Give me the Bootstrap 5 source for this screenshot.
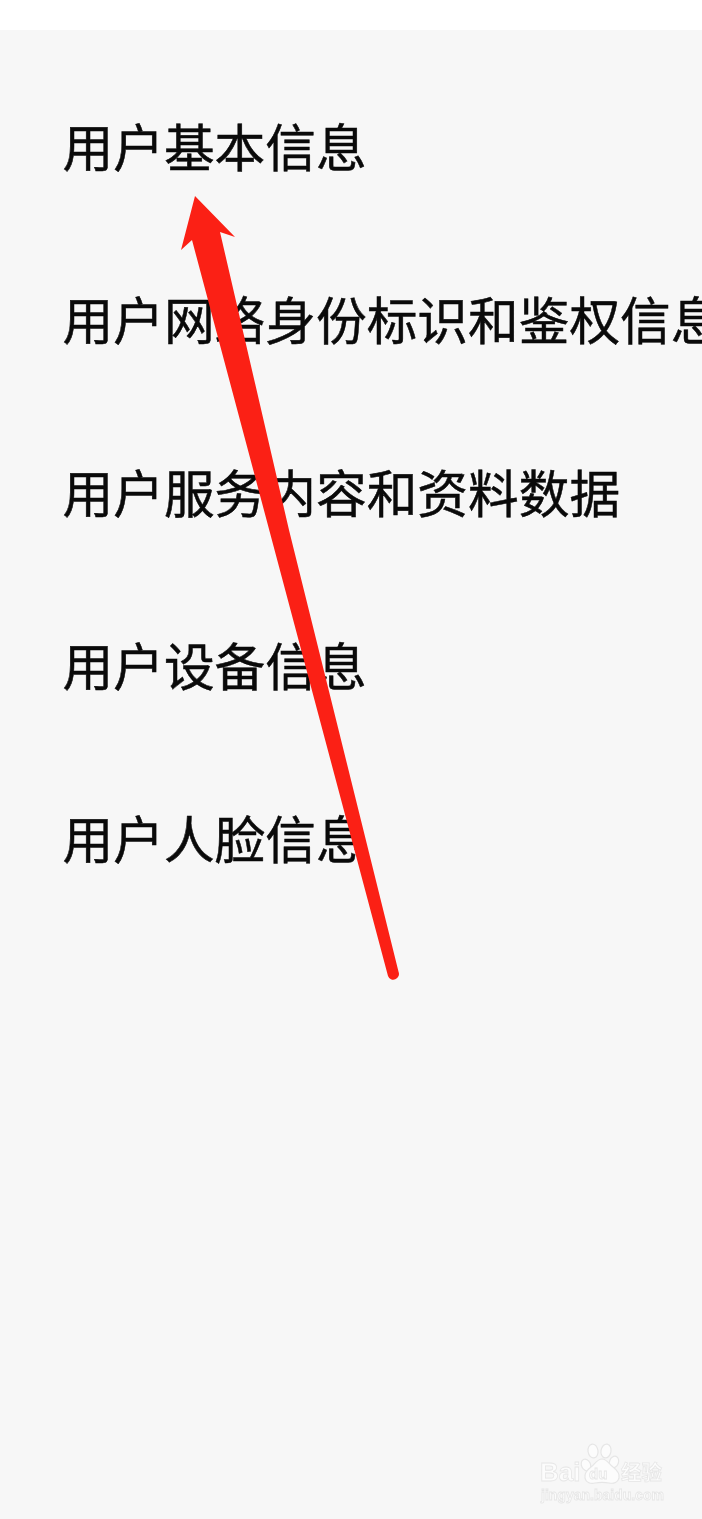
<!DOCTYPE html>
<html lang="zh-CN">
<head>
<meta charset="utf-8">
<title>用户信息</title>
<link href="https://cdn.jsdelivr.net/npm/bootstrap@5.3.0/dist/css/bootstrap.min.css" rel="stylesheet">
<style>
html,body{margin:0;width:702px;height:1519px;overflow:hidden;background:#fff;}
.topgap{height:30px;background:#fff;}
.sheet{height:1489px;background:#f7f7f7;padding-top:29px;}
.entry{height:173px;padding-left:62.5px;font:400 50.7px/173px "Noto Sans CJK SC","Liberation Sans",sans-serif;color:#0a0a0a;white-space:nowrap;-webkit-text-stroke:.5px #0a0a0a;}
.overlay{position:absolute;left:0;top:0;pointer-events:none;}
.mark-wm{position:absolute;left:537px;top:1442px;width:130px;height:64px;font-family:"Liberation Sans",sans-serif;color:#fcfcfc;-webkit-text-stroke:.8px #e6e6e6;filter:blur(.3px);}
.wm-bai{position:absolute;left:3px;top:15px;font-size:26px;font-weight:700;line-height:30px;}
.wm-du{position:absolute;left:52px;top:24px;font-size:15px;font-weight:700;line-height:16px;}
.wm-cn{position:absolute;left:84px;top:17px;font:700 20.5px/24px "Noto Sans CJK SC",sans-serif;white-space:nowrap;}
.wm-url{position:absolute;left:4px;top:44px;font-size:14px;line-height:18px;white-space:nowrap;font-weight:700;}
</style>
<script src="https://cdn.jsdelivr.net/npm/bootstrap@5.3.0/dist/js/bootstrap.bundle.min.js"></script>
</head>
<body class="position-relative">
<div class="topgap"></div>
<div class="sheet d-flex flex-column">
  <div class="entry">用户基本信息</div>
  <div class="entry">用户网络身份标识和鉴权信息</div>
  <div class="entry">用户服务内容和资料数据</div>
  <div class="entry">用户设备信息</div>
  <div class="entry">用户人脸信息</div>
</div>
<svg class="overlay" width="702" height="1519" viewBox="0 0 702 1519" aria-hidden="true">
  <path fill="#fb2015" d="M195 196 L235 237 L220 232 L289 530 L398.6 972 A5.6 5.6 0 0 1 388 976 L192 240 L181 250 Z"/>
</svg>
<div class="mark-wm">
  <svg class="overlay" width="130" height="64" viewBox="0 0 130 64" aria-hidden="true">
    <g fill="#fcfcfc" stroke="#e6e6e6" stroke-width="1.2">
      <ellipse cx="49" cy="23" rx="4.5" ry="6" transform="rotate(-25 49 23)"/>
      <ellipse cx="56" cy="9" rx="5" ry="7" transform="rotate(-8 56 9)"/>
      <ellipse cx="69" cy="9" rx="5" ry="7" transform="rotate(10 69 9)"/>
      <ellipse cx="77" cy="20" rx="4.5" ry="6" transform="rotate(20 77 20)"/>
      <path d="M65 17c-5 0-7 5-11 8-4 3-7 6-6 11 1 5 6 6 10 5 5-1 9-1 14 0 5 1 9-1 10-5 1-5-2-8-6-11-4-3-6-8-11-8z"/>
    </g>
  </svg>
  <span class="wm-bai">Bai</span>
  <span class="wm-du">du</span>
  <span class="wm-cn">经验</span>
  <span class="wm-url">jingyan.baidu.com</span>
</div>
</body>
</html>
